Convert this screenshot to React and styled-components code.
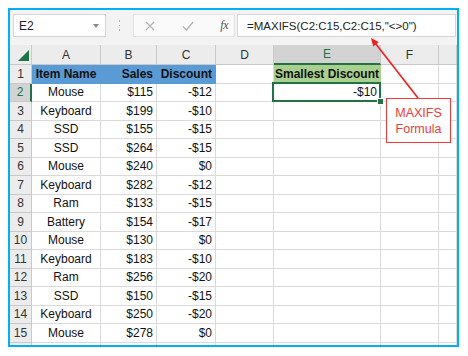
import React from 'react';
import styled, { createGlobalStyle } from 'styled-components';

const GlobalStyle = createGlobalStyle`
  body {
    margin: 0;
    background: #fff;
    font-family: "Liberation Sans", Arial, sans-serif;
  }
`;

const Frame = styled.div`
  position: relative;
  margin: 8px 0 0 8px;
  width: 451px;
  height: 339px;
  box-sizing: border-box;
  border: 2px solid #00b0f0;
  overflow: hidden;
  background: #fff;
`;

const Toolbar = styled.div`
  height: 35px;
  box-sizing: border-box;
  padding: 4px 1px 8px 3px;
  display: flex;
  background: #f3f3f3;
`;

const NameBox = styled.div`
  width: 93px;
  box-sizing: border-box;
  border: 1px solid #d6d6d6;
  background: #fff;
  display: flex;
  align-items: center;
  justify-content: space-between;
  padding: 0 6px 0 5px;
  font-size: 12px;
  color: #222;
`;

const Caret = styled.span`
  width: 0;
  height: 0;
  border-left: 3.5px solid transparent;
  border-right: 3.5px solid transparent;
  border-top: 4px solid #888;
`;

const Grip = styled.div`
  width: 27px;
  display: flex;
  flex-direction: column;
  align-items: center;
  justify-content: center;
  gap: 3px;

  span {
    width: 1.5px;
    height: 1.5px;
    background: #b0b0b0;
  }
`;

const ActionBox = styled.div`
  width: 102px;
  box-sizing: border-box;
  border: 1px solid #e2e2e2;
  background: #fafafa;
  display: flex;
  align-items: center;
  justify-content: space-between;
  padding: 0 6px 0 11px;
`;

const Fx = styled.span`
  font-family: "Liberation Serif", "Times New Roman", serif;
  font-style: italic;
  font-size: 12px;
  color: #555;
  letter-spacing: -0.5px;
`;

const FormulaBox = styled.div`
  flex: 1;
  margin-left: 2px;
  box-sizing: border-box;
  border: 1px solid #d6d6d6;
  background: #fff;
  display: flex;
  align-items: center;
  padding-left: 9px;
  font-size: 11.5px;
  color: #222;
`;

const Sheet = styled.div`
  display: grid;
  grid-template-columns: 22px 69px 56px 59px 58px 107px 58px 1fr;
  grid-template-rows: 20px repeat(16, 18.5px);
`;

const Cell = styled.div`
  position: relative;
  box-sizing: border-box;
  display: flex;
  align-items: center;
  justify-content: ${p => p.$align || 'flex-start'};
  padding: 0 3px;
  font-size: 12px;
  font-weight: ${p => (p.$bold ? 700 : 400)};
  color: #111;
  white-space: nowrap;
  background: ${p => p.$fill || '#fff'};
  border-right: 1px solid ${p => p.$fill || '#dadada'};
  border-bottom: 1px solid ${p => p.$fill || '#dadada'};

  ${p => p.$selected && `
    &::after {
      content: '';
      position: absolute;
      inset: -2px -1px -1px -2px;
      border: 2px solid #217346;
      pointer-events: none;
    }
    &::before {
      content: '';
      position: absolute;
      right: -4px;
      bottom: -4px;
      width: 5px;
      height: 5px;
      background: #217346;
      border: 1px solid #fff;
      z-index: 1;
    }
  `}
`;

const HeadCell = styled.div`
  box-sizing: border-box;
  display: flex;
  align-items: center;
  justify-content: center;
  font-size: 12px;
  color: ${p => (p.$active ? '#217346' : '#333')};
  background: ${p => (p.$active ? '#d3d3d3' : '#ececec')};
  border-right: ${p => (p.$side && p.$active ? '2px solid #217346' : '1px solid #c9c9c9')};
  border-bottom: ${p => (!p.$side && p.$active ? '2px solid #217346' : '1px solid #c9c9c9')};
`;

const Corner = styled(HeadCell)`
  align-items: flex-end;
  justify-content: flex-end;
  padding: 0 2px 3px 0;
`;

const Overlay = styled.svg`
  position: absolute;
  left: 0;
  top: 0;
  pointer-events: none;
`;

const Callout = styled.div`
  position: absolute;
  left: 376px;
  top: 88px;
  width: 65px;
  height: 45px;
  box-sizing: border-box;
  border: 1px solid #f23a3a;
  background: #fff;
  display: flex;
  flex-direction: column;
  align-items: center;
  justify-content: center;
  font-size: 12.5px;
  line-height: 16px;
  color: #f23a3a;
`;

const columns = ['A', 'B', 'C', 'D', 'E', 'F', ''];

const rows = [
  ['Mouse', 115, -12],
  ['Keyboard', 199, -10],
  ['SSD', 155, -15],
  ['SSD', 264, -15],
  ['Mouse', 240, 0],
  ['Keyboard', 282, -12],
  ['Ram', 133, -15],
  ['Battery', 154, -17],
  ['Mouse', 130, 0],
  ['Keyboard', 183, -10],
  ['Ram', 256, -20],
  ['SSD', 150, -15],
  ['Keyboard', 250, -20],
  ['Mouse', 278, 0],
];

const money = v => (v < 0 ? `-$${-v}` : `$${v}`);

const App = () => {
  return (
    <>
      <GlobalStyle />
      <Frame>
        <Toolbar>
          <NameBox>
            E2
            <Caret />
          </NameBox>
          <Grip>
            <span />
            <span />
            <span />
          </Grip>
          <ActionBox>
            <svg width="10" height="10" viewBox="0 0 10 10">
              <path d="M1 1L9 9M9 1L1 9" stroke="#b5b5b5" strokeWidth="1.2" />
            </svg>
            <svg width="12" height="10" viewBox="0 0 12 10">
              <path d="M1 5.5L4.5 9L11 1" stroke="#b5b5b5" strokeWidth="1.4" fill="none" />
            </svg>
            <Fx>fx</Fx>
          </ActionBox>
          <FormulaBox>=MAXIFS(C2:C15,C2:C15,"&lt;&gt;0")</FormulaBox>
        </Toolbar>

        <Sheet>
          <Corner>
            <svg width="11" height="11" viewBox="0 0 11 11">
              <path d="M11 0V11H0Z" fill="#217346" />
            </svg>
          </Corner>
          {columns.map((c, i) => (
            <HeadCell key={i} $active={c === 'E'}>{c}</HeadCell>
          ))}

          <HeadCell $side>1</HeadCell>
          <Cell $fill="#5b9bd5" $bold $align="center">Item Name</Cell>
          <Cell $fill="#5b9bd5" $bold $align="flex-end">Sales</Cell>
          <Cell $fill="#5b9bd5" $bold $align="flex-end">Discount</Cell>
          <Cell />
          <Cell $fill="#a9d08e" $bold $align="center">Smallest Discount</Cell>
          <Cell />
          <Cell />

          {rows.map(([item, sales, discount], i) => (
            <React.Fragment key={i}>
              <HeadCell $side $active={i === 0}>{i + 2}</HeadCell>
              <Cell $align="center">{item}</Cell>
              <Cell $align="flex-end">{money(sales)}</Cell>
              <Cell $align="flex-end">{money(discount)}</Cell>
              <Cell />
              {i === 0 ? (
                <Cell $align="flex-end" $selected>-$10</Cell>
              ) : (
                <Cell />
              )}
              <Cell />
              <Cell />
            </React.Fragment>
          ))}

          <HeadCell $side />
          {columns.map((c, i) => (
            <Cell key={i} />
          ))}
        </Sheet>

        <Overlay width="447" height="335" viewBox="0 0 447 335">
          <line x1="408" y1="88" x2="365.5" y2="33.5" stroke="#f01e1e" strokeWidth="1.6" />
          <polygon points="361,28 368.7,32.1 363.2,36.5" fill="#f01e1e" />
        </Overlay>
        <Callout>
          <span>MAXIFS</span>
          <span>Formula</span>
        </Callout>
      </Frame>
    </>
  );
};

export default App;
